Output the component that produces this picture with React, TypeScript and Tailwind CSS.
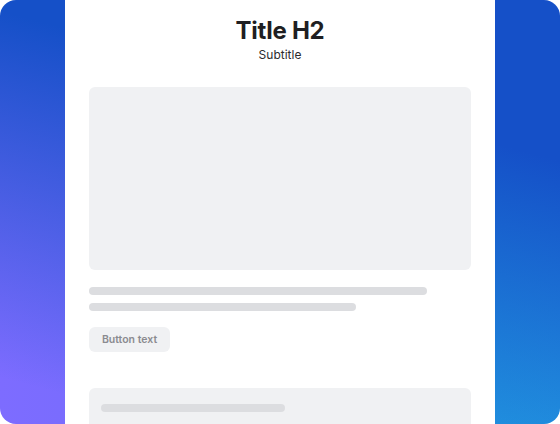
export default function App() {
  return (
    <div className="w-[560px] h-[424px] bg-white" style={{ fontFamily: 'Inter, "Noto Sans", sans-serif' }}>
      <div className="h-full rounded-2xl overflow-hidden flex justify-center bg-[linear-gradient(195deg,#1550c8_28%,rgba(21,80,200,0)_92%),linear-gradient(to_right,#7d6cff_0%,#7a6cfe_11%,#23a0e4_89%,#24a2e5_100%)]">
        <div className="w-[430px] h-full bg-white px-6 pt-[15px] flex flex-col overflow-hidden">
          {/* Header */}
          <h2 className="shrink-0 text-center text-2xl leading-8 font-bold text-[#1f1f22] tracking-[-0.01em]">Title H2</h2>
          <p className="shrink-0 text-center text-xs leading-4 text-[#2b2b2e]">Subtitle</p>

          {/* Media placeholder */}
          <div className="mt-6 h-[183px] shrink-0 rounded-md bg-[#f0f1f3]" />

          {/* Text lines */}
          <div className="mt-[17px] shrink-0 flex flex-col gap-2">
            <div className="h-2 w-[338px] rounded-full bg-[#dcdde0]" />
            <div className="h-2 w-[267px] rounded-full bg-[#dcdde0]" />
          </div>

          <button className="mt-4 shrink-0 self-start h-[25px] w-[81px] rounded-md bg-[#f0f1f3] text-[10.5px] font-semibold text-[#8b8b90]">
            Button text
          </button>

          {/* Next card */}
          <div className="mt-[36px] shrink-0 h-[60px] rounded-md bg-[#f0f1f3] px-3 pt-4">
            <div className="h-2 w-[184px] rounded-full bg-[#dcdde0]" />
          </div>
        </div>
      </div>
    </div>
  );
}
